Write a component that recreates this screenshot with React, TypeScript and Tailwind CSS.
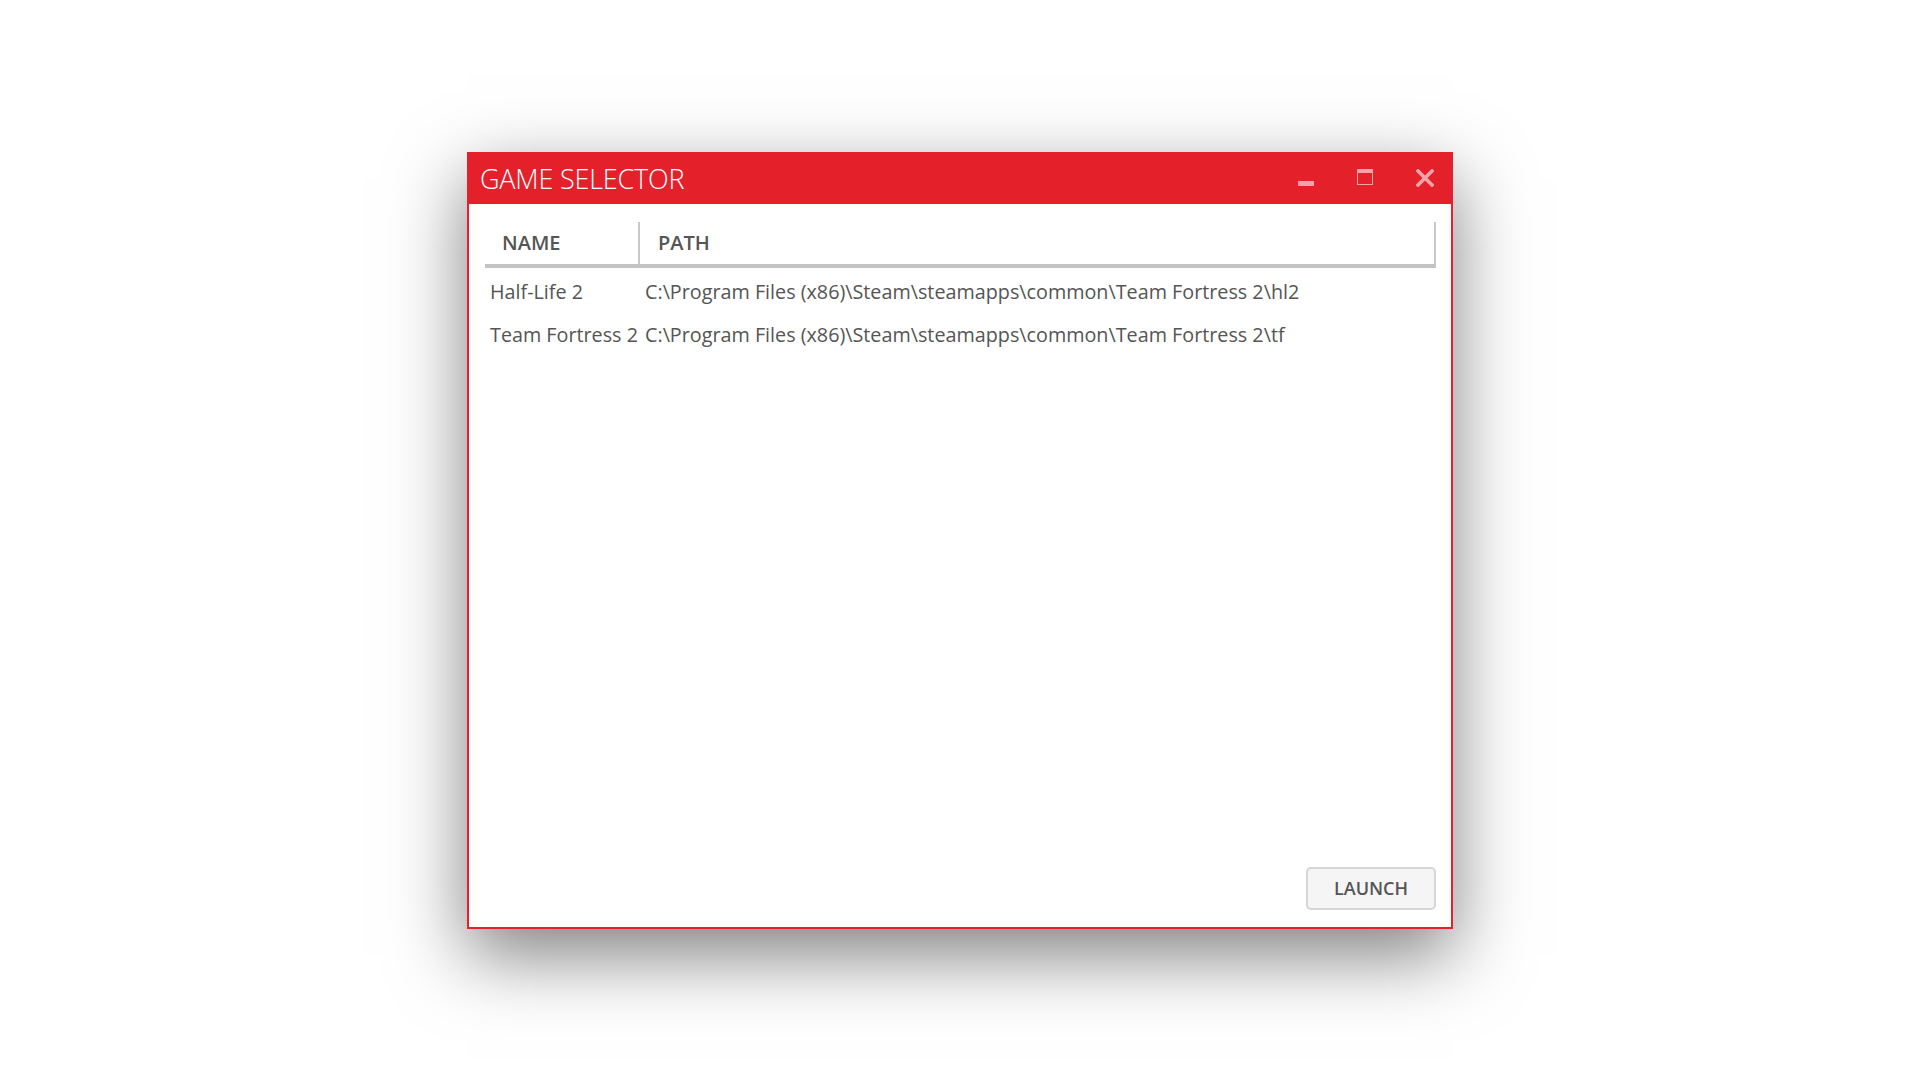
import React from 'react';

const games = [
  { name: 'Half-Life 2', path: 'C:\\Program Files (x86)\\Steam\\steamapps\\common\\Team Fortress 2\\hl2' },
  { name: 'Team Fortress 2', path: 'C:\\Program Files (x86)\\Steam\\steamapps\\common\\Team Fortress 2\\tf' },
];

export default function App() {
  return (
    <div className="w-[1920px] h-[1080px] bg-white flex items-center justify-center font-['Open_Sans','Noto_Sans',sans-serif]">
      <div className="w-[986px] h-[777px] border-2 border-[#e4202a] bg-white flex flex-col shadow-[0_26px_70px_rgba(0,0,0,0.5)]">
        {/* title bar */}
        <div className="h-[50px] bg-[#e4202a] flex items-start shrink-0">
          <div className="flex-1 pl-[11px] text-[27px] font-light leading-[50px] text-white tracking-[-0.2px]">GAME SELECTOR</div>
          <div className="flex items-start gap-[43px] pr-[17px]">
            <svg width="16" height="5" className="mt-[27px]" viewBox="0 0 16 5">
              <rect x="0" y="0" width="16" height="5" fill="#f5a3a9" />
            </svg>
            <svg width="16" height="16" className="mt-[15px]" viewBox="0 0 16 16">
              <rect x="0.5" y="0.5" width="15" height="15" fill="none" stroke="#f5a3a9" strokeWidth="1" />
              <rect x="0" y="0" width="16" height="4" fill="#f5a3a9" />
            </svg>
            <svg width="18" height="18" className="mt-[15px]" viewBox="0 0 18 18">
              <path d="M2 2 L16 16 M16 2 L2 16" stroke="#f5a3a9" strokeWidth="3.6" strokeLinecap="square" />
            </svg>
          </div>
        </div>

        {/* body */}
        <div className="flex-1 flex flex-col pl-4 pr-[15px] pt-[18px] pb-[17px]">
          <div className="flex-1">
            <div className="flex h-[46px] border-b-4 border-[#c3c3c3] border-r-2 border-r-[#c8c8c8]">
              <div className="w-[155px] pl-[17px] text-[20px] font-semibold leading-[42px] text-[#555555] border-r-2 border-[#c8c8c8]">NAME</div>
              <div className="flex-1 pl-[18px] text-[20px] font-semibold leading-[42px] text-[#555555]">PATH</div>
            </div>
            <div className="mt-[2px]">
              {games.map(g => (
                <div key={g.name} className="flex h-[43px] leading-[43px] text-[19.75px] text-[#555555]">
                  <div className="w-[155px] pl-[5px] whitespace-nowrap">{g.name}</div>
                  <div className="flex-1 pl-[5px] whitespace-nowrap">{g.path}</div>
                </div>
              ))}
            </div>
          </div>
          <div className="flex justify-end">
            <button className="w-[130px] h-[43px] rounded-[5px] border-2 border-[#d6d6d6] bg-[#f5f5f5] text-[18px] font-semibold text-[#555555]">
              LAUNCH
            </button>
          </div>
        </div>
      </div>
    </div>
  );
}
